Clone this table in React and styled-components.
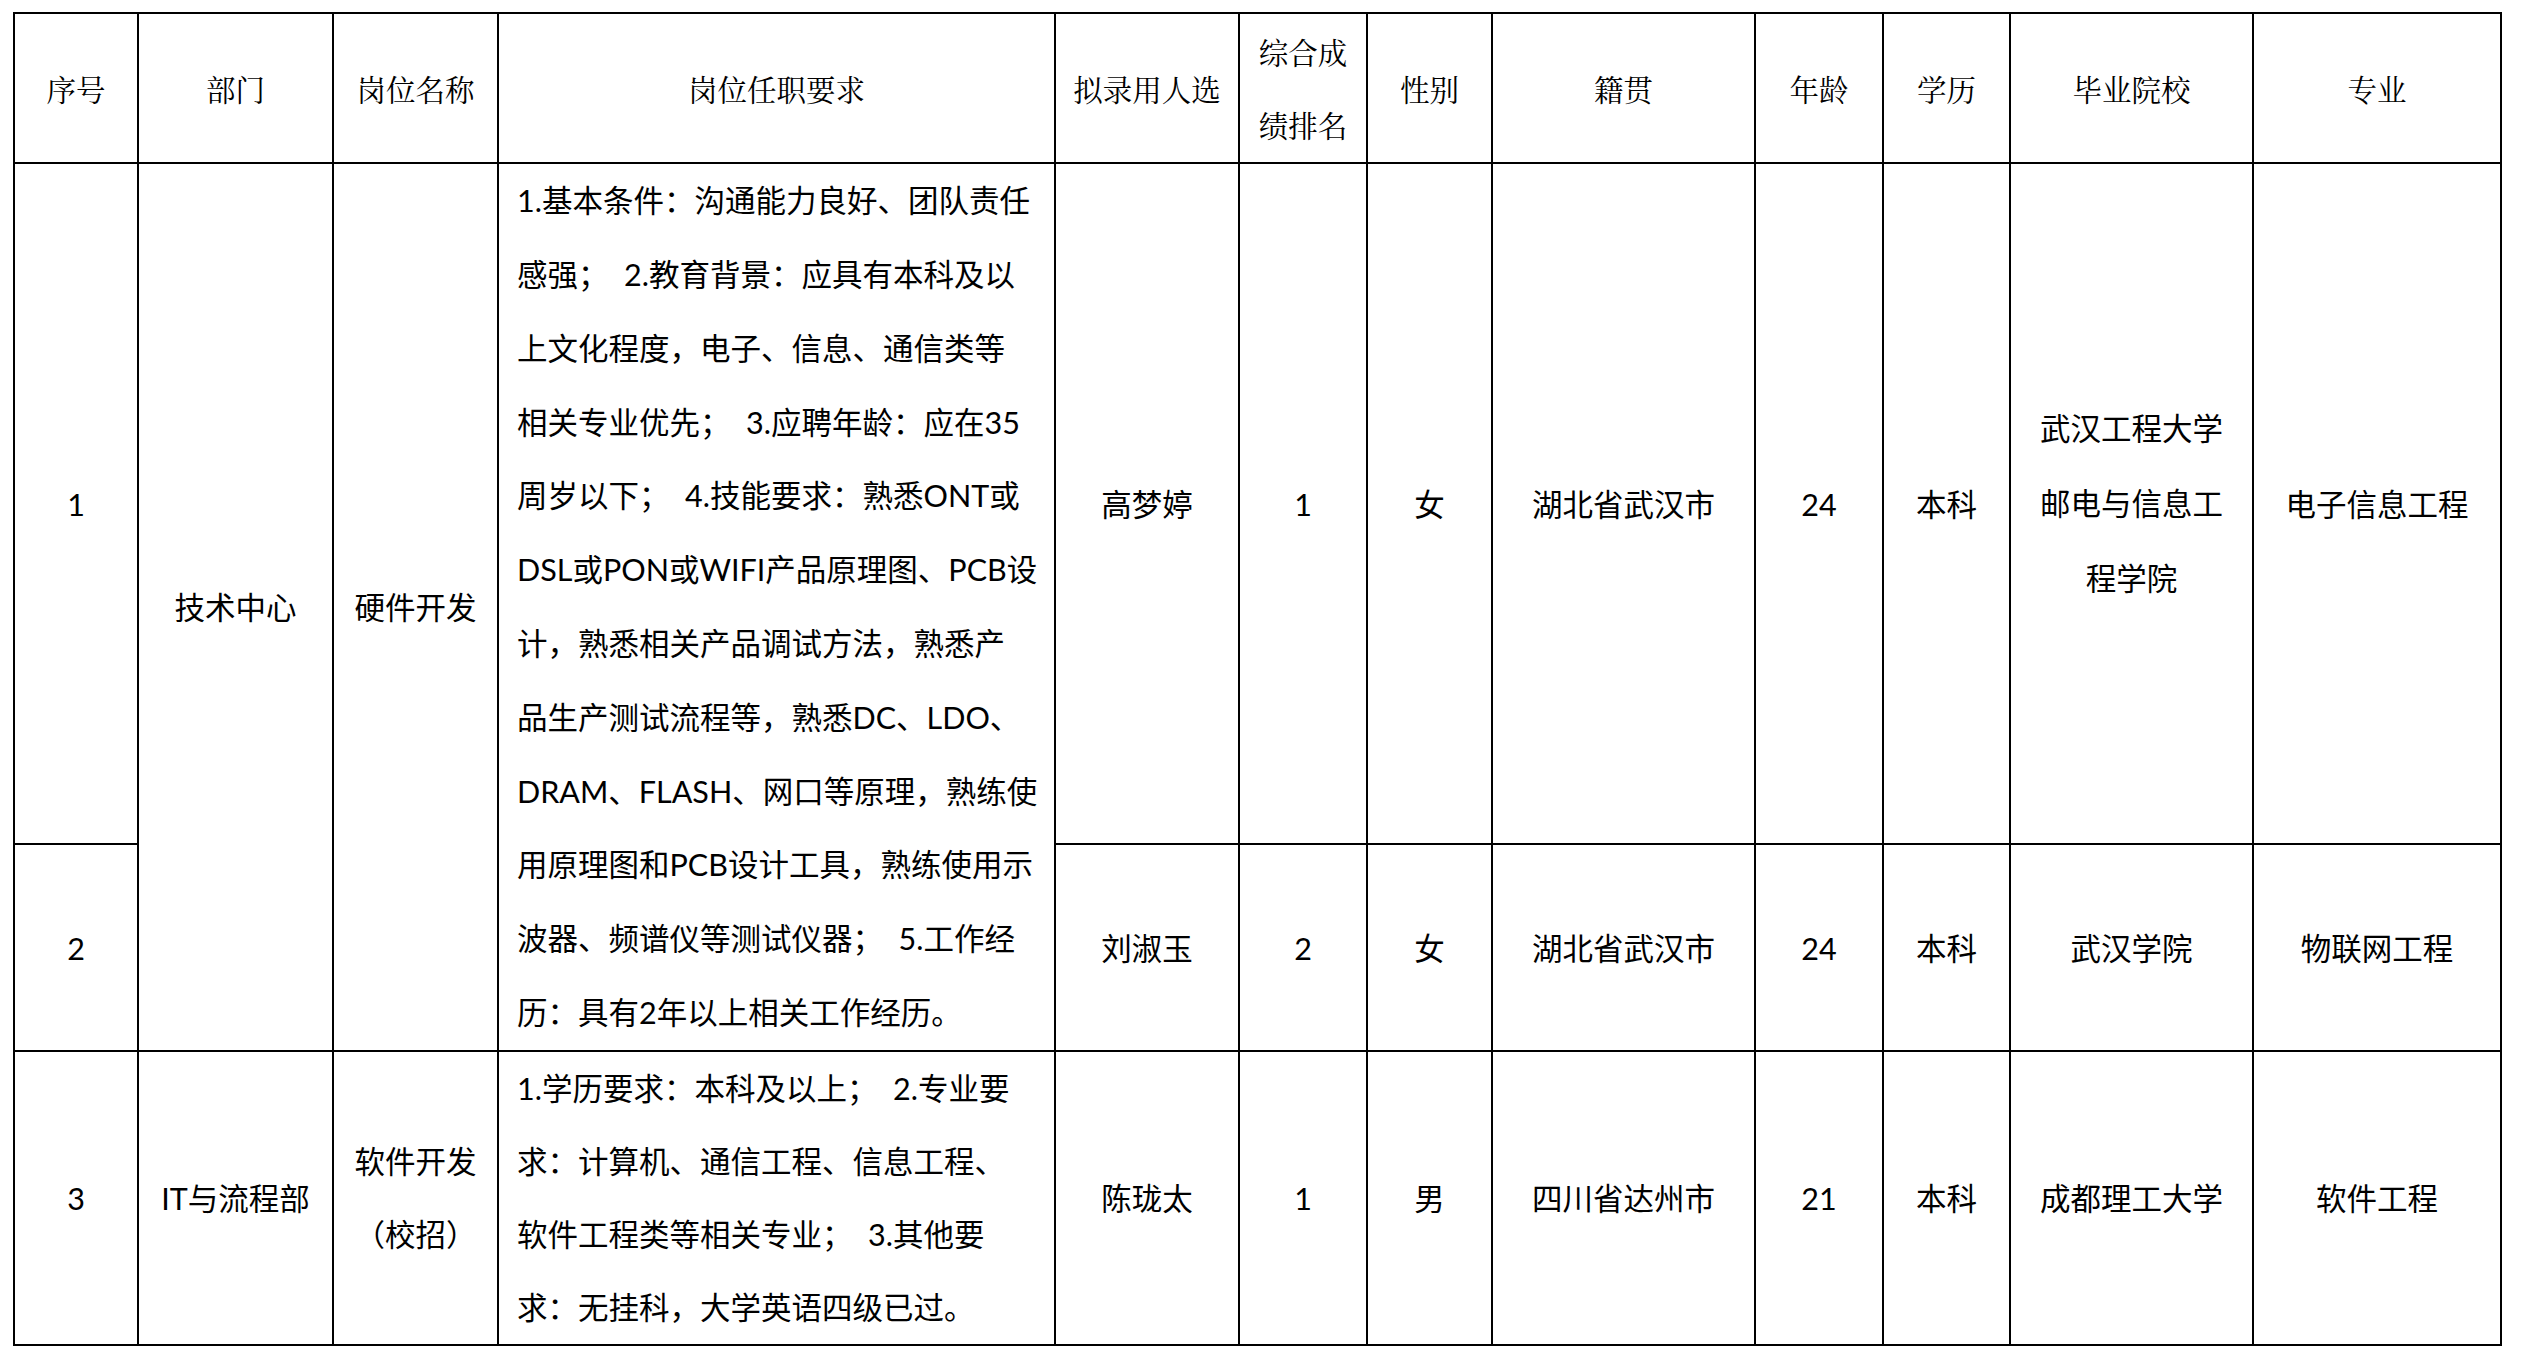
import React from "react";
import styled, { createGlobalStyle } from "styled-components";

const Global = createGlobalStyle`
  html, body { margin: 0; padding: 0; background: #fff; }
  body { font-family: "Lato", "Noto Sans CJK SC", sans-serif; color: #000; }
`;

const Page = styled.div`
  padding: 12px 0 0 13px;
`;

const Table = styled.table`
  border-collapse: collapse;
  table-layout: fixed;
  width: 2489px;
  border: 2px solid #000;
`;

const Col = styled.col`
  width: ${(p) => p.$w}px;
`;

const Row = styled.tr`
  height: ${(p) => p.$h}px;
`;

const HeadCell = styled.th`
  border: 2px solid #000;
  padding: 0;
  font-family: "Noto Serif CJK SC", "Noto Sans CJK SC", serif;
  font-weight: 400;
  font-size: 29.5px;
  text-align: center;
  vertical-align: middle;
`;

const Cell = styled.td`
  border: 2px solid #000;
  padding: 0;
  font-family: "Lato", "Noto Sans CJK SC", sans-serif;
  font-size: 30.5px;
  line-height: 74px;
  text-align: center;
  vertical-align: middle;
  white-space: nowrap;
`;

const ReqCell = styled.td`
  border: 2px solid #000;
  padding: 0 0 0 18px;
  font-family: "Lato", "Noto Sans CJK SC", sans-serif;
  font-size: 30.5px;
  text-align: left;
  vertical-align: middle;
  white-space: pre;
`;

const Line = styled.div`
  height: ${(p) => p.$lh}px;
  line-height: ${(p) => p.$lh}px;
  white-space: pre;
  overflow: visible;
`;

const Lines = ({ items, lh = 74 }) =>
  items.map((t, i) => (
    <Line key={i} $lh={lh}>
      {t}
    </Line>
  ));

const widths = [124, 195, 165, 557, 184, 128, 125, 263, 128, 127, 243, 248];

const heads = [
  ["序号"],
  ["部门"],
  ["岗位名称"],
  ["岗位任职要求"],
  ["拟录用人选"],
  ["综合成", "绩排名"],
  ["性别"],
  ["籍贯"],
  ["年龄"],
  ["学历"],
  ["毕业院校"],
  ["专业"],
];

const req1 = [
  "1.基本条件：沟通能力良好、团队责任",
  "感强；  2.教育背景：应具有本科及以",
  "上文化程度，电子、信息、通信类等",
  "相关专业优先；  3.应聘年龄：应在35",
  "周岁以下；  4.技能要求：熟悉ONT或",
  "DSL或PON或WIFI产品原理图、PCB设",
  "计，熟悉相关产品调试方法，熟悉产",
  "品生产测试流程等，熟悉DC、LDO、",
  "DRAM、FLASH、网口等原理，熟练使",
  "用原理图和PCB设计工具，熟练使用示",
  "波器、频谱仪等测试仪器；  5.工作经",
  "历：具有2年以上相关工作经历。",
];

const req3 = [
  "1.学历要求：本科及以上；  2.专业要",
  "求：计算机、通信工程、信息工程、",
  "软件工程类等相关专业；  3.其他要",
  "求：无挂科，大学英语四级已过。",
];

export default function App() {
  return (
    <Page>
      <Global />
      <Table>
        <colgroup>
          {widths.map((w, i) => (
            <Col key={i} $w={w} />
          ))}
        </colgroup>
        <tbody>
          <Row $h={150}>
            {heads.map((h, i) => (
              <HeadCell key={i}>
                <Lines items={h} lh={73} />
              </HeadCell>
            ))}
          </Row>
          <Row $h={681}>
            <Cell>1</Cell>
            <Cell rowSpan={2}>技术中心</Cell>
            <Cell rowSpan={2}>硬件开发</Cell>
            <ReqCell rowSpan={2}>
              <Lines items={req1} lh={73.8} />
            </ReqCell>
            <Cell>高梦婷</Cell>
            <Cell>1</Cell>
            <Cell>女</Cell>
            <Cell>湖北省武汉市</Cell>
            <Cell>24</Cell>
            <Cell>本科</Cell>
            <Cell>
              <Lines items={["武汉工程大学", "邮电与信息工", "程学院"]} lh={75} />
            </Cell>
            <Cell>电子信息工程</Cell>
          </Row>
          <Row $h={207}>
            <Cell>2</Cell>
            <Cell>刘淑玉</Cell>
            <Cell>2</Cell>
            <Cell>女</Cell>
            <Cell>湖北省武汉市</Cell>
            <Cell>24</Cell>
            <Cell>本科</Cell>
            <Cell>武汉学院</Cell>
            <Cell>物联网工程</Cell>
          </Row>
          <Row $h={294}>
            <Cell>3</Cell>
            <Cell>IT与流程部</Cell>
            <Cell>
              <Lines items={["软件开发", "（校招）"]} lh={73} />
            </Cell>
            <ReqCell>
              <Lines items={req3} lh={73} />
            </ReqCell>
            <Cell>陈珑太</Cell>
            <Cell>1</Cell>
            <Cell>男</Cell>
            <Cell>四川省达州市</Cell>
            <Cell>21</Cell>
            <Cell>本科</Cell>
            <Cell>成都理工大学</Cell>
            <Cell>软件工程</Cell>
          </Row>
        </tbody>
      </Table>
    </Page>
  );
}
